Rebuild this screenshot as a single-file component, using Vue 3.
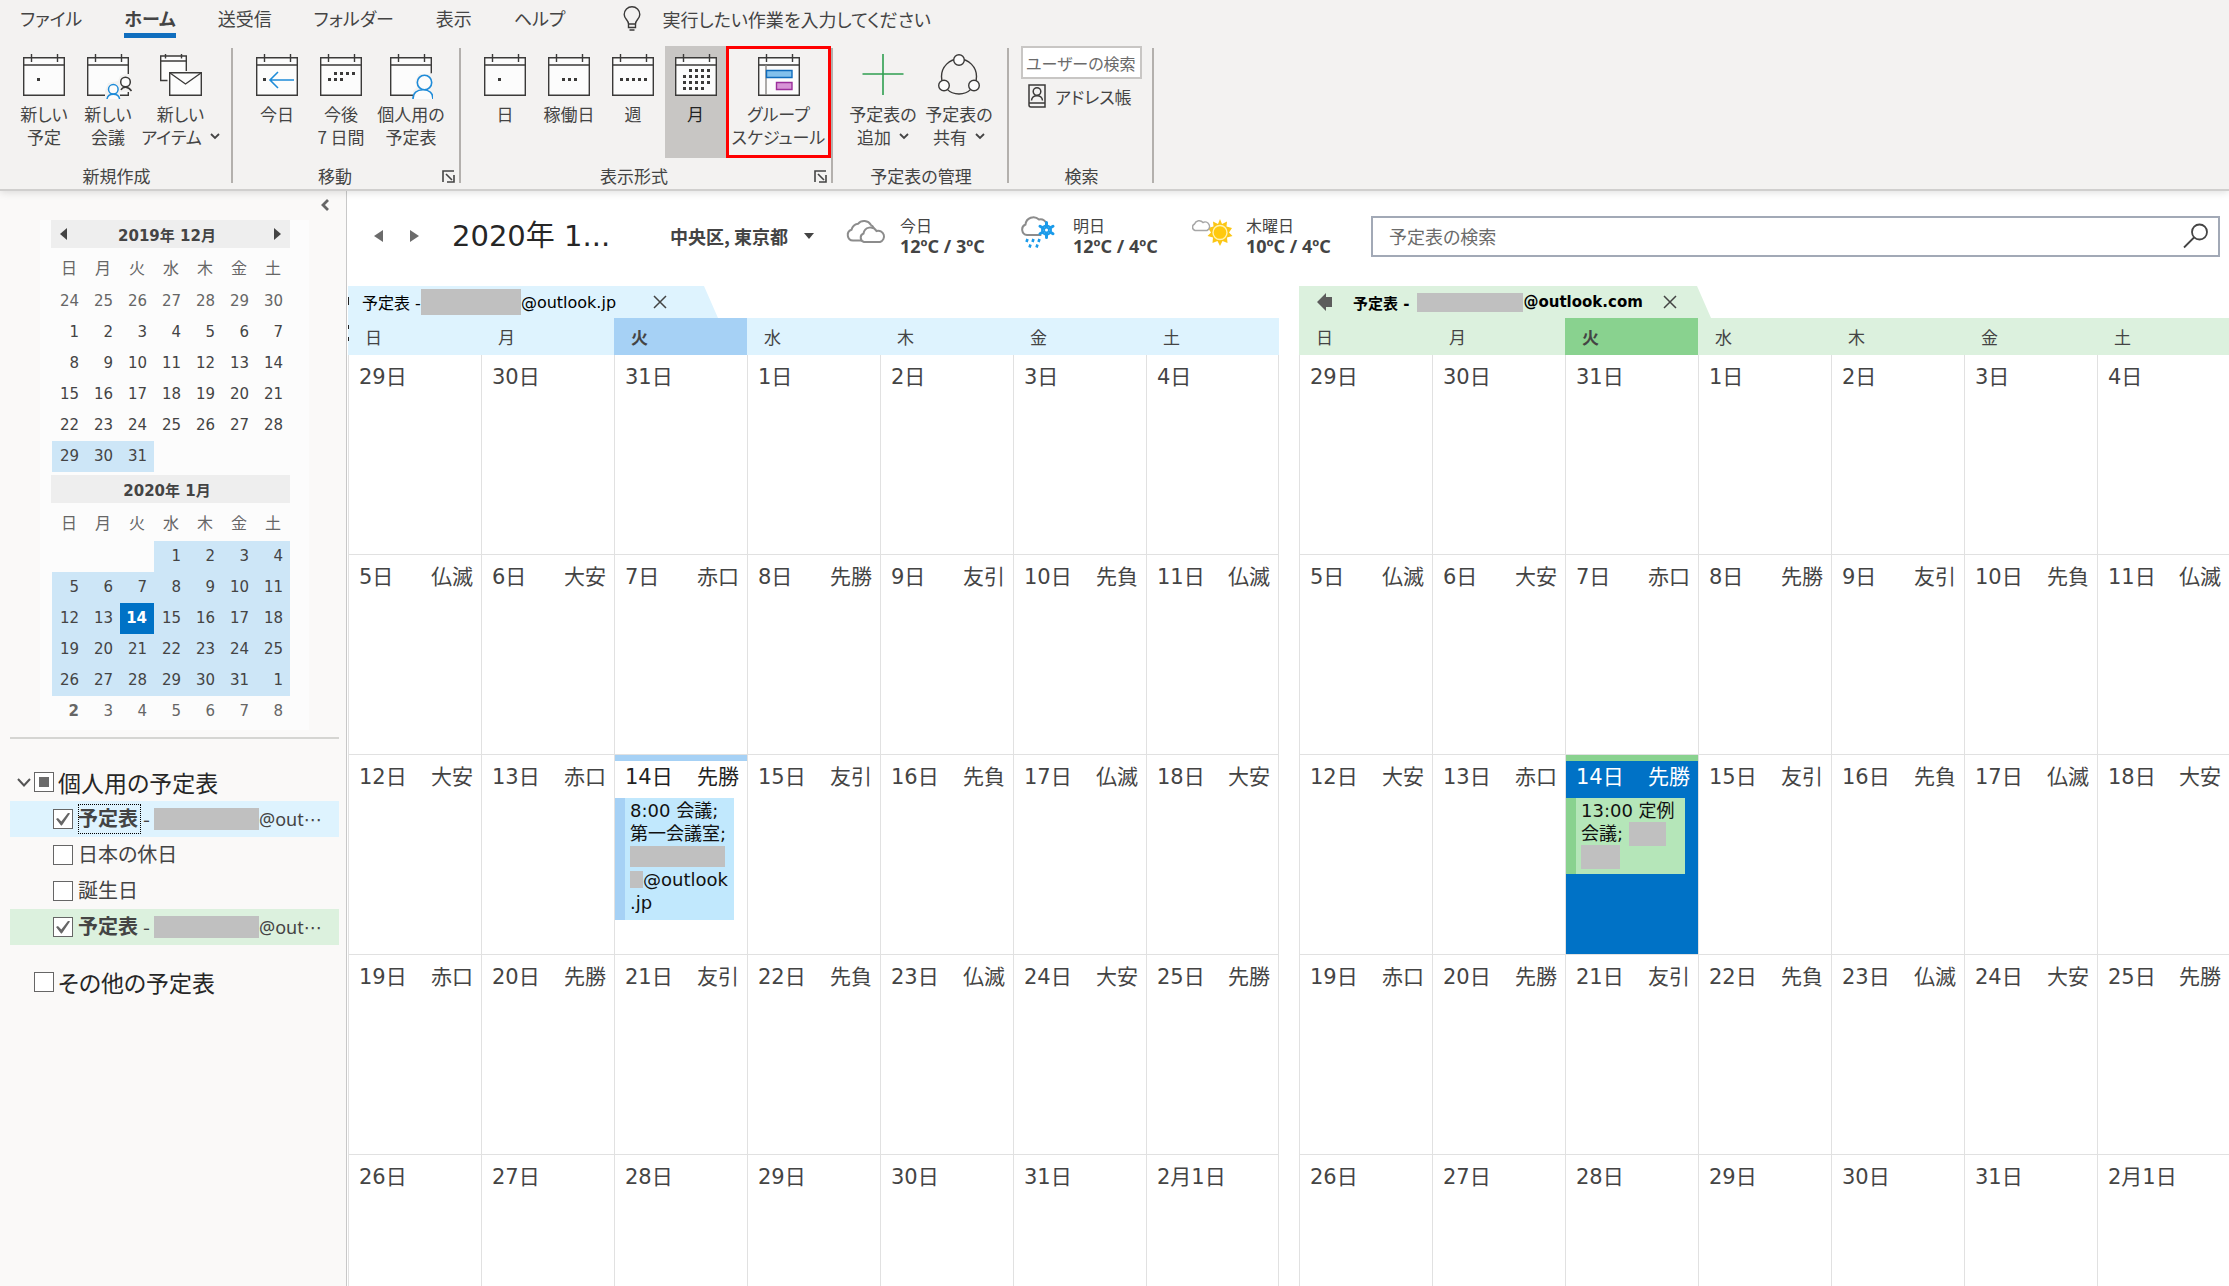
<script setup>
const tabs = ['ファイル', 'ホーム', '送受信', 'フォルダー', '表示', 'ヘルプ']
const weekdays = ['日', '月', '火', '水', '木', '金', '土']

const createItems = [
  { icon: 'i-day', lines: ['新しい', '予定'] },
  { icon: 'i-meeting', lines: ['新しい', '会議'] },
  { icon: 'i-items', lines: ['新しい', 'アイテム'], menu: true, size: 'wider' },
]
const moveItems = [
  { icon: 'i-today', lines: ['今日'] },
  { icon: 'i-next7', lines: ['今後', '7 日間'] },
  { icon: 'i-person', lines: ['個人用の', '予定表'], size: 'wide' },
]
const viewItems = [
  { icon: 'i-day', lines: ['日'] },
  { icon: 'i-work', lines: ['稼働日'] },
  { icon: 'i-week', lines: ['週'] },
  { icon: 'i-month', lines: ['月'], size: 'active' },
  { icon: 'i-schedule', lines: ['グループ', 'スケジュール'], size: 'marked' },
]
const manageItems = [
  { icon: 'i-add', lines: ['予定表の', '追加'], menu: true, size: 'wide' },
  { icon: 'i-share', lines: ['予定表の', '共有'], menu: true, size: 'wide' },
]
const groups = [
  { name: '新規作成', items: createItems },
  { name: '移動', items: moveItems, launcher: true },
  { name: '表示形式', items: viewItems, launcher: true, flush: true },
  { name: '予定表の管理', items: manageItems },
]

function chunk(list) {
  const rows = []
  for (let i = 0; i < list.length; i += 7) rows.push(list.slice(i, i + 7))
  return rows
}
const december = chunk([
  ...[24, 25, 26, 27, 28, 29, 30].map(n => ({ n, cls: 'dim' })),
  ...Array.from({ length: 31 }, (_, i) => ({ n: i + 1, cls: i >= 28 ? 'range' : '' })),
  ...Array.from({ length: 4 }, () => ({ n: '', cls: '' })),
])
const january = chunk([
  ...Array.from({ length: 3 }, () => ({ n: '', cls: '' })),
  ...Array.from({ length: 31 }, (_, i) => ({ n: i + 1, cls: i === 13 ? 'today' : 'range' })),
  { n: 1, cls: 'range' },
  { n: 2, cls: 'dim strong' },
  ...[3, 4, 5, 6, 7, 8].map(n => ({ n, cls: 'dim' })),
])
const minis = [
  { title: '2019年 12月', rows: december, nav: true },
  { title: '2020年 1月', rows: january, nav: false },
]

const rokuyo = [
  [],
  ['仏滅', '大安', '赤口', '先勝', '友引', '先負', '仏滅'],
  ['大安', '赤口', '先勝', '友引', '先負', '仏滅', '大安'],
  ['赤口', '先勝', '友引', '先負', '仏滅', '大安', '先勝'],
  [],
]
const dayNames = [
  ['29日', '30日', '31日', '1日', '2日', '3日', '4日'],
  ['5日', '6日', '7日', '8日', '9日', '10日', '11日'],
  ['12日', '13日', '14日', '15日', '16日', '17日', '18日'],
  ['19日', '20日', '21日', '22日', '23日', '24日', '25日'],
  ['26日', '27日', '28日', '29日', '30日', '31日', '2月1日'],
]
const weeks = dayNames.map((row, w) =>
  row.map((day, d) => ({ day, note: rokuyo[w][d] || '', today: w === 2 && d === 2 }))
)
const panels = [
  { key: 'blue', domain: '@outlook.jp' },
  { key: 'green', domain: '@outlook.com' },
]
const forecast = [
  { icon: 'w-cloud', day: '今日', temp: '12ºC / 3ºC' },
  { icon: 'w-sleet', day: '明日', temp: '12ºC / 4ºC' },
  { icon: 'w-sun', day: '木曜日', temp: '10ºC / 4ºC' },
]
const calendars = [
  { id: 'c1', name: '予定表', account: true, checked: true, cls: 'blue' },
  { id: 'c2', name: '日本の休日' },
  { id: 'c3', name: '誕生日' },
  { id: 'c4', name: '予定表', account: true, checked: true, cls: 'green' },
]
</script>

<template>
  <div class="app">
    <svg class="defs" aria-hidden="true">
      <symbol id="cal" viewBox="0 0 44 46">
        <path d="M1.7 4.7H42.3V42.3H1.7Z" fill="#fcfcfc" />
        <path d="M1.7 4.7H42.3V42.3H1.7ZM1.7 12H42.3M9.5 1V9M35.5 1V9" fill="none" stroke="#3b3a39" stroke-width="1.4" />
      </symbol>
      <symbol id="i-day" viewBox="0 0 44 46">
        <use href="#cal" /><path d="M15 25h3v3h-3z" fill="#3b3a39" />
      </symbol>
      <symbol id="i-work" viewBox="0 0 44 46">
        <use href="#cal" /><path d="M15 25h3v3h-3zM21 25h3v3h-3zM27 25h3v3h-3z" fill="#3b3a39" />
      </symbol>
      <symbol id="i-week" viewBox="0 0 44 46">
        <use href="#cal" /><path d="M9 25h3v3h-3zM15 25h3v3h-3zM21 25h3v3h-3zM27 25h3v3h-3zM33 25h3v3h-3z" fill="#3b3a39" />
      </symbol>
      <symbol id="i-month" viewBox="0 0 44 46">
        <use href="#cal" />
        <path d="M15 17.500H37M9 23.500H37M9 29.500H37M9 35.500H31" stroke="#3b3a39" stroke-width="3" stroke-dasharray="3 3" fill="none" />
      </symbol>
      <symbol id="i-next7" viewBox="0 0 44 46">
        <use href="#cal" />
        <path d="M15 20.500H36M9 26.500H24" stroke="#3b3a39" stroke-width="3" stroke-dasharray="3 3" fill="none" />
      </symbol>
      <symbol id="i-today" viewBox="0 0 44 46">
        <use href="#cal" /><path d="M8 25h3v3h-3z" fill="#3b3a39" />
        <path d="M39 27H15M23 19L15 27L23 35" fill="none" stroke="#1e8bd8" stroke-width="1.600" />
      </symbol>
      <symbol id="i-person" viewBox="0 0 44 46">
        <use href="#cal" />
        <path d="M24 46V38L28 34L26 28L30 21H38L44 20V46Z" fill="#f3f2f1" />
        <circle cx="35.500" cy="29.500" r="7.200" fill="#fcfcfc" stroke="#1e8bd8" stroke-width="1.600" />
        <path d="M25.500 46C25.500 40 29.500 36.700 35.500 36.700S45.500 40 45.500 46" transform="translate(-1.500 0)" fill="#fcfcfc" stroke="#1e8bd8" stroke-width="1.600" />
      </symbol>
      <symbol id="i-meeting" viewBox="0 0 48 46">
        <svg width="44" height="46"><use href="#cal" /></svg>
        <path d="M19 46V38L22 30L32 28L34 23L40 21H46V39H34V46Z" fill="#f3f2f1" />
        <circle cx="39.500" cy="29" r="4.800" fill="#fcfcfc" stroke="#3b3a39" stroke-width="1.500" />
        <path d="M35 37C37 33.300 42 33 45.500 38" fill="none" stroke="#3b3a39" stroke-width="1.500" />
        <circle cx="27.300" cy="36.300" r="4.800" fill="#fcfcfc" stroke="#1e8bd8" stroke-width="1.500" />
        <path d="M21 46C22 39.600 32.600 39.600 33.600 46" fill="#fcfcfc" stroke="#1e8bd8" stroke-width="1.500" />
      </symbol>
      <symbol id="i-items" viewBox="0 0 44 46">
        <path d="M8.500 27.500H1.700V3H27.300V18" fill="#fcfcfc" stroke="#3b3a39" stroke-width="1.400" />
        <path d="M1.700 8H27.300M6.500 1V5.500M22.500 1V5.500" stroke="#3b3a39" stroke-width="1.400" />
        <path d="M10.700 19.700H42.300V42.300H10.700Z" fill="#fcfcfc" stroke="#3b3a39" stroke-width="1.400" />
        <path d="M10.700 19.700L26.500 31L42.300 19.700" fill="none" stroke="#3b3a39" stroke-width="1.400" />
      </symbol>
      <symbol id="i-schedule" viewBox="0 0 44 46">
        <use href="#cal" />
        <path d="M9 12V42" stroke="#8a8886" stroke-width="1.400" />
        <path d="M9.500 17.500h25.500v7h-25.500z" fill="#83c1ec" stroke="#0f6cbd" stroke-width="1.400" />
        <path d="M19.500 29.500h15.500v7h-15.500z" fill="#d794d6" stroke="#9b2f9b" stroke-width="1.400" />
      </symbol>
      <symbol id="i-add" viewBox="0 0 44 46">
        <path d="M22 1V42M1.500 21H42.500" stroke="#2f9e50" stroke-width="1.600" />
      </symbol>
      <symbol id="i-share" viewBox="0 0 44 46">
        <g fill="none" stroke="#3b3a39" stroke-width="1.400">
          <circle cx="22" cy="23.500" r="17.500" />
          <g fill="#fcfcfc"><circle cx="22" cy="7" r="5.300" /><circle cx="7" cy="32.500" r="5.300" /><circle cx="37" cy="32.500" r="5.300" /></g>
        </g>
      </symbol>
      <symbol id="w-cloud" viewBox="0 0 42 36">
        <g fill="#fff" stroke="#8c8c8c" stroke-width="2">
          <path d="M7 25.500A5.500 5.500 0 0 1 5.500 14.800A8 8 0 0 1 12 8.800A8 8 0 0 1 25 10A6 6 0 0 1 28 16L24 25.500Z" />
          <path d="M18 27A4.500 4.500 0 0 1 17.500 18.500A7 7 0 0 1 30.500 16A5.600 5.600 0 0 1 34 27Z" />
        </g>
      </symbol>
      <symbol id="w-sleet" viewBox="0 0 42 36">
        <path d="M8 20A5.500 5.500 0 0 1 6.500 9.500A8 8 0 0 1 20 4.500A6.500 6.500 0 0 1 28 10L26 20Z" fill="#fff" stroke="#8c8c8c" stroke-width="2" />
        <circle cx="27.500" cy="15" r="7.500" fill="#fff" />
        <path d="M27.500 7.500V22.500M21 11.300L34 18.700M34 11.300L21 18.700" stroke="#1b9bea" stroke-width="3" stroke-linecap="round" />
        <circle cx="27.500" cy="15" r="4.500" fill="none" stroke="#1b9bea" stroke-width="2" />
        <circle cx="27.500" cy="15" r="1.500" fill="#fff" />
        <path d="M8.500 24L7.500 27M14.500 24L13.500 27M20.500 24L19.500 27M11.500 29.500L10.500 32.500M18.500 29.500L17.500 32.500" stroke="#1b9bea" stroke-width="2.600" />
      </symbol>
      <symbol id="w-sun" viewBox="0 0 42 36">
        <path d="M28 4L30 9L35 6.500L34.500 11.500L40 13L37 17.500L40.500 21L35 22.500L35.500 28L30.500 26L28 31L25.500 26L20.500 28L21 22.500L15.500 21L19 17.500L16 13L21.500 11.500L21 6.500L26 9Z" fill="#fbc614" />
        <circle cx="28" cy="17.500" r="7" fill="#ffc90e" stroke="#fff3b0" stroke-width="1.400" />
        <path d="M3 15.500A3.500 3.500 0 0 1 2.500 9A5 5 0 0 1 11 7.500A4.200 4.200 0 0 1 15 15.500Z" fill="#fff" stroke="#a6a6a6" stroke-width="1.500" />
      </symbol>
    </svg>

    <header class="ribbon">
      <nav class="tabs">
        <a v-for="t in tabs" :key="t" href="#" class="tab" :class="{ current: t === 'ホーム' }">{{ t }}</a>
        <button class="tell">
          <svg width="18" height="26" viewBox="0 0 18 26" fill="none" stroke="#3b3a39" stroke-width="1.400">
            <path d="M5.500 18C5.500 14 1.200 13 1.200 8.500A7.800 7.800 0 0 1 16.800 8.500C16.800 13 12.500 14 12.500 18ZM5.500 18V21.500H12.500V18M6.500 24H11.500" />
          </svg>
          <span>実行したい作業を入力してください</span>
        </button>
      </nav>
      <div class="groups">
        <section v-for="g in groups" :key="g.name" class="group" :class="{ flush: g.flush }">
          <div class="items">
            <button v-for="(it, i) in g.items" :key="i" class="big" :class="it.size">
              <svg :width="it.icon === 'i-meeting' ? 48 : 44" height="46" :class="{ shift: it.icon === 'i-meeting' }"><use :href="'#' + it.icon" /></svg>
              <span v-for="(l, k) in it.lines" :key="l" class="line">{{ l }}<svg v-if="it.menu && k === 1" class="chev" width="10" height="7" viewBox="0 0 10 7"><path d="M1 1L5 5L9 1" fill="none" stroke="#444" stroke-width="1.800" /></svg></span>
            </button>
          </div>
          <div class="foot">
            <span class="gname">{{ g.name }}</span>
            <button v-if="g.launcher" class="launcher" :aria-label="g.name">
              <svg width="13" height="13" viewBox="0 0 13 13" fill="none" stroke="#444" stroke-width="1.600"><path d="M1 12V1H12M4 4L10 10M12 5V12H5" /></svg>
            </button>
          </div>
        </section>
        <section class="group">
          <div class="items find">
            <input class="people" type="text" placeholder="ユーザーの検索" aria-label="ユーザーの検索">
            <button class="book">
              <svg width="18" height="24" viewBox="0 0 18 24" fill="none" stroke="#3b3a39" stroke-width="1.500">
                <path d="M1 1H17V23H3A2 2 0 0 1 1 21ZM1 19H17" /><circle cx="9" cy="7.500" r="3.800" /><path d="M3.500 16.500C4 10 14 10 14.500 16.500" />
              </svg>
              <span>アドレス帳</span>
            </button>
          </div>
          <div class="foot"><span class="gname">検索</span></div>
        </section>
      </div>
    </header>

    <div class="body">
      <aside class="side">
        <div class="collapse">
          <button aria-label="最小化"><svg width="10" height="12" viewBox="0 0 10 12"><path d="M8 1L3 6L8 11" fill="none" stroke="#666" stroke-width="2.800" /></svg></button>
        </div>
        <div class="minis">
          <section v-for="m in minis" :key="m.title" class="mini">
            <div class="mhead">
              <button v-if="m.nav" aria-label="前の月"><svg width="7" height="12"><path d="M7 0V12L0 6Z" fill="#444" /></svg></button>
              <span>{{ m.title }}</span>
              <button v-if="m.nav" aria-label="次の月"><svg width="7" height="12"><path d="M0 0V12L7 6Z" fill="#444" /></svg></button>
            </div>
            <table>
              <thead><tr><th v-for="d in weekdays" :key="d">{{ d }}</th></tr></thead>
              <tbody>
                <tr v-for="(r, i) in m.rows" :key="i">
                  <td v-for="(c, k) in r" :key="k" :class="c.cls">{{ c.n }}</td>
                </tr>
              </tbody>
            </table>
          </section>
        </div>
        <hr>
        <div class="tree">
          <div class="root">
            <button class="twist" aria-label="折りたたむ"><svg width="14" height="9" viewBox="0 0 14 9"><path d="M1 1L7 7.500L13 1" fill="none" stroke="#555" stroke-width="2" /></svg></button>
            <input id="mine" type="checkbox" class="mixed"><label for="mine">個人用の予定表</label>
          </div>
          <div v-for="(c, i) in calendars" :key="c.id" class="leaf" :class="c.cls">
            <input :id="c.id" type="checkbox" :checked="c.checked">
            <label :for="c.id"><span class="cname" :class="{ bold: c.account, focus: i === 0 }">{{ c.name }}</span><template v-if="c.account"><span class="dash">-</span><span class="mask"></span><span class="host">@out⋯</span></template></label>
          </div>
          <div class="root other">
            <input id="others" type="checkbox"><label for="others">その他の予定表</label>
          </div>
        </div>
      </aside>

      <main class="main">
        <div class="bar">
          <button class="nav" aria-label="前へ"><svg width="9" height="12"><path d="M9 0V12L0 6Z" fill="#6b6b6b" /></svg></button>
          <button class="nav" aria-label="次へ"><svg width="9" height="12"><path d="M0 0V12L9 6Z" fill="#6b6b6b" /></svg></button>
          <h1>2020年 1...</h1>
          <button class="place"><span>中央区, 東京都</span><svg width="10" height="6"><path d="M0 0H10L5 6Z" fill="#444" /></svg></button>
          <div v-for="f in forecast" :key="f.day" class="weather">
            <svg width="42" height="36"><use :href="'#' + f.icon" /></svg>
            <div><div class="wday">{{ f.day }}</div><div class="temp">{{ f.temp }}</div></div>
          </div>
          <div class="search">
            <input type="text" placeholder="予定表の検索" aria-label="予定表の検索">
            <button aria-label="検索"><svg width="26" height="26" viewBox="0 0 26 26" fill="none" stroke="#444" stroke-width="1.800"><circle cx="16.500" cy="9" r="7.500" /><path d="M11 14.500L1 24.500" /></svg></button>
          </div>
        </div>

        <div class="panels">
          <section v-for="p in panels" :key="p.key" class="panel" :class="p.key">
            <div class="caltab">
              <svg v-if="p.key === 'green'" class="back" width="16" height="18" viewBox="0 0 16 18"><path d="M0 9L9 0V4H15V14H9V18Z" fill="#5c5c5c" /></svg>
              <span class="owner">予定表 -</span><span class="mask"></span><span>{{ p.domain }}</span>
              <button class="close" aria-label="閉じる"><svg width="14" height="14" viewBox="0 0 14 14"><path d="M1 1L13 13M13 1L1 13" stroke="#444" stroke-width="1.500" /></svg></button>
            </div>
            <table class="month">
              <thead><tr><th v-for="(d, i) in weekdays" :key="d" :class="{ hot: i === 2 }">{{ d }}</th></tr></thead>
              <tbody>
                <tr v-for="(w, i) in weeks" :key="i">
                  <td v-for="c in w" :key="c.day" :class="{ today: c.today }">
                    <div class="date"><span>{{ c.day }}</span><span>{{ c.note }}</span></div>
                    <div v-if="c.today && p.key === 'blue'" class="event">
                      <div>8:00 会議;</div>
                      <div>第一会議室;</div>
                      <div><span class="mask long"></span></div>
                      <div><span class="mask tiny"></span>@outlook</div>
                      <div>.jp</div>
                    </div>
                    <div v-if="c.today && p.key === 'green'" class="event">
                      <div>13:00 定例</div>
                      <div>会議;<span class="mask word"></span></div>
                      <div><span class="mask name"></span></div>
                    </div>
                  </td>
                </tr>
              </tbody>
            </table>
          </section>
        </div>
      </main>
    </div>
  </div>
</template>

<style>
body { margin: 0; overflow: hidden; }
</style>

<style scoped>
.app {
  display: flex; flex-direction: column; height: 100vh; overflow: hidden;
  font-family: "DejaVu Sans", "Noto Sans CJK JP", sans-serif; font-size: 16px; color: #444; background: #fff;
}
.app *, .app *::before { box-sizing: border-box; }
.defs { position: absolute; width: 0; height: 0; }
svg { display: block; flex: none; }
button { border: 0; padding: 0; background: none; color: inherit; font: inherit; white-space: nowrap; }
input { font: inherit; color: inherit; margin: 0; }
table { border-spacing: 0; table-layout: fixed; width: 100%; }
th, td { padding: 0; font-weight: 400; }
.mask { display: inline-block; background: #c0c0c0; flex: none; }

.ribbon {
  flex: none; position: relative; background: #f3f2f1; border-bottom: 2px solid #d0cfce;
  box-shadow: 0 1px 8px rgba(0, 0, 0, .14); font-family: "Noto Sans CJK JP", sans-serif; font-feature-settings: "palt";
}
.tabs { display: flex; height: 46px; padding-left: 20px; gap: 42px; font-size: 18px; line-height: 36px; }
.tab { color: inherit; text-decoration: none; height: 38px; white-space: nowrap; }
.tab.current { font-weight: 700; border-bottom: 5px solid #106ebe; }
.tell { display: flex; align-items: center; gap: 22px; height: 38px; margin-left: 15px; }
.groups { display: flex; height: 143px; }
.group { position: relative; display: flex; flex-direction: column; padding: 0 12px; }
.group::after { content: ""; position: absolute; right: 0; top: 2px; height: 135px; width: 2px; background: #b3b0ad; }
.group.flush { padding-right: 2px; }
.items { display: flex; height: 112px; }
.big { display: flex; flex-direction: column; align-items: center; width: 64px; padding-top: 7px; font-size: 17px; line-height: 23px; }
.big > svg { margin-bottom: 3px; }
.big .shift { margin-left: 4px; }
.big.wide { width: 76px; }
.big.wider { width: 81px; }
.big.active { background: #c8c6c4; color: #222; width: 61px; }
.big.marked { width: 105px; border: 3px solid #f00; padding-top: 4px; }
.line { display: flex; align-items: center; gap: 8px; }
.foot { display: flex; align-items: center; height: 24px; margin-top: 6px; font-size: 17px; line-height: 24px; }
.gname { flex: 1; text-align: center; }
.launcher { display: flex; justify-content: flex-end; width: 30px; margin-right: -6px; }
.flush .launcher { width: 32px; margin-right: 4px; }
.find { flex-direction: column; }
.people { width: 121px; height: 33px; border: 2px solid #c8c6c4; background: #fff; padding: 0 3px; font-size: 16px; font-feature-settings: "palt"; }
.people::placeholder, .search input::placeholder { color: #6b6b6b; opacity: 1; }
.book { display: flex; align-items: center; gap: 9px; height: 34px; padding-left: 7px; font-size: 17px; }

.body { flex: 1; display: flex; min-height: 0; }
.side { flex: none; width: 347px; border-right: 1px solid #c8c8c8; background: #faf9f8; overflow: hidden; }
.collapse { display: flex; justify-content: flex-end; height: 29px; padding: 8px 16px 0 0; }
.collapse button { height: 12px; }
.minis { width: 269px; margin-left: 40px; padding: 0 19px 3px 11px; background: #fcfcfc; }
.mini + .mini { margin-top: 3px; }
.mini table { width: calc(100% - 1px); margin-left: 1px; }
.mhead { display: flex; align-items: center; height: 28px; padding: 0 9px; background: #eee; font-weight: 700; font-size: 15px; }
.mhead span { flex: 1; text-align: center; padding-right: 7px; }
.mini thead th { height: 38px; font-size: 16px; color: #666; }
.mini td { height: 31px; line-height: 31px; text-align: right; padding-right: 7px; font-size: 15px; }
.mini .dim { color: #666; }
.mini .strong { font-weight: 700; }
.mini .range { background: #cde6f7; }
.mini .today { background: #0072c6; color: #fff; font-weight: 700; }
hr { height: 2px; margin: 7px 7px 0 10px; border: 0; background: #d5d5d2; }
.tree { padding: 24px 7px 0 10px; font-family: "Noto Sans CJK JP", sans-serif; font-feature-settings: "palt"; }
.root { display: flex; align-items: center; height: 38px; padding-left: 7px; gap: 4px; font-size: 23px; color: #262626; }
.root label { line-height: 36px; }
.twist { width: 14px; margin-right: -1px; }
.other { margin-top: 18px; padding-left: 24px; }
.leaf { display: flex; align-items: center; height: 36px; padding-left: 43px; gap: 5px; font-size: 20px; }
.leaf label { display: flex; align-items: center; line-height: 28px; }
.leaf.blue { background: #def3fe; }
.leaf.green { background: #dcf1de; }
.cname { height: 30px; }
.bold { font-weight: 700; width: 63px; }
.focus { outline: 1px dotted #000; outline-offset: -1px; }
.dash { width: 13px; padding-left: 2px; }
.host { font-family: "Noto Sans", "DejaVu Sans", sans-serif; font-size: 18px; }
.leaf .mask { width: 105px; height: 22px; }
input[type="checkbox"] { appearance: none; flex: none; display: grid; place-items: center; width: 20px; height: 20px; border: 1px solid #666; background: #fff; }
.mixed::before { content: ""; width: 10px; height: 10px; background: #6b6b6b; }
input:checked::before { content: ""; width: 14px; height: 13px; background: #666; clip-path: polygon(0 50%, 14% 42%, 38% 70%, 88% 0, 100% 8%, 42% 100%, 36% 100%); }

.main { flex: 1; min-width: 0; padding-left: 1px; overflow: hidden; }
.bar { display: flex; align-items: center; height: 90px; padding: 0 9px 0 12px; margin-bottom: 5px; }
.nav { display: flex; justify-content: center; flex: none; width: 36px; }
h1 { flex: none; width: 218px; margin: 0 0 0 20px; font-size: 29px; line-height: 40px; font-weight: 400; color: #262626; white-space: nowrap; }
.place { display: flex; align-items: center; gap: 16px; flex: none; width: 176px; font-family: "Noto Sans CJK JP", sans-serif; font-size: 18px; font-weight: 700; }
.weather { display: flex; gap: 12px; flex: none; width: 173px; line-height: 21px; white-space: nowrap; }
.wday { font-family: "Noto Sans CJK JP", sans-serif; font-size: 16px; }
.temp { font-family: "Noto Sans", sans-serif; font-size: 18px; font-weight: 700; }
.search { flex: 1; display: flex; align-items: center; min-width: 200px; height: 41px; margin-left: 6px; padding-right: 9px; border: 2px solid #a2a9b6; }
.search input { flex: 1; min-width: 0; border: 0; outline: 0; padding: 0 16px; background: none; font-family: "Noto Sans CJK JP", sans-serif; font-feature-settings: "palt"; font-size: 18px; }

.panels { display: flex; gap: 20px; margin-right: -1px; }
.panel { position: relative; flex: 1; min-width: 0; --soft: #def3fe; --hot: #a6d1f5; --fill: #c1e8fd; }
.panel.green { --soft: #dcf1de; --hot: #89d28f; --fill: #b5e6b9; }
.panel.blue::before {
  content: ""; position: absolute; z-index: 1; left: 0; top: 11px; width: 1px; height: 44px;
  background: linear-gradient(#222 8px, transparent 8px 28px, #222 28px 32px, transparent 32px 40px, #222 40px);
}
.caltab { display: flex; align-items: center; width: 370px; height: 32px; padding-left: 14px; background: var(--soft); color: #000; clip-path: polygon(0 0, 356px 0, 370px 100%, 0 100%); white-space: nowrap; }
.caltab .mask { width: 100px; height: 26px; }
.close { margin-left: 37px; }
.green .caltab { width: 412px; padding-left: 18px; font-weight: 700; font-size: 15px; clip-path: polygon(0 0, 398px 0, 412px 100%, 0 100%); }
.green .caltab .mask { width: 106px; height: 19px; margin-left: 8px; }
.green .close { margin-left: 20px; }
.back { margin-right: 20px; }
.month th { height: 37px; padding-left: 17px; text-align: left; font-size: 17px; background: var(--soft); }
.month th.hot { background: var(--hot); font-weight: 700; }
.month td { height: 200px; vertical-align: top; border-left: 1px solid #e1e1e1; border-bottom: 1px solid #e1e1e1; }
.month td:last-child { border-right: 1px solid #e1e1e1; }
.date { display: flex; justify-content: space-between; height: 43px; padding: 0 8px 0 10px; font-size: 21px; line-height: 44px; white-space: nowrap; }
.today .date { border-top: 6px solid var(--hot); line-height: 32px; color: #222; }
.green td.today { background: #0072c6; }
.green .today .date { color: #fff; }
.event { margin-right: 13px; padding: 1px 0 6px 5px; border-left: 10px solid var(--hot); background: var(--fill); color: #111; font-size: 18px; line-height: 23px; white-space: nowrap; }
.event div { display: flex; align-items: center; height: 23px; }
.long { width: 95px; height: 21px; }
.tiny { width: 13px; height: 17px; }
.word { width: 37px; height: 24px; margin-left: 6px; }
.name { width: 39px; height: 24px; }
</style>
